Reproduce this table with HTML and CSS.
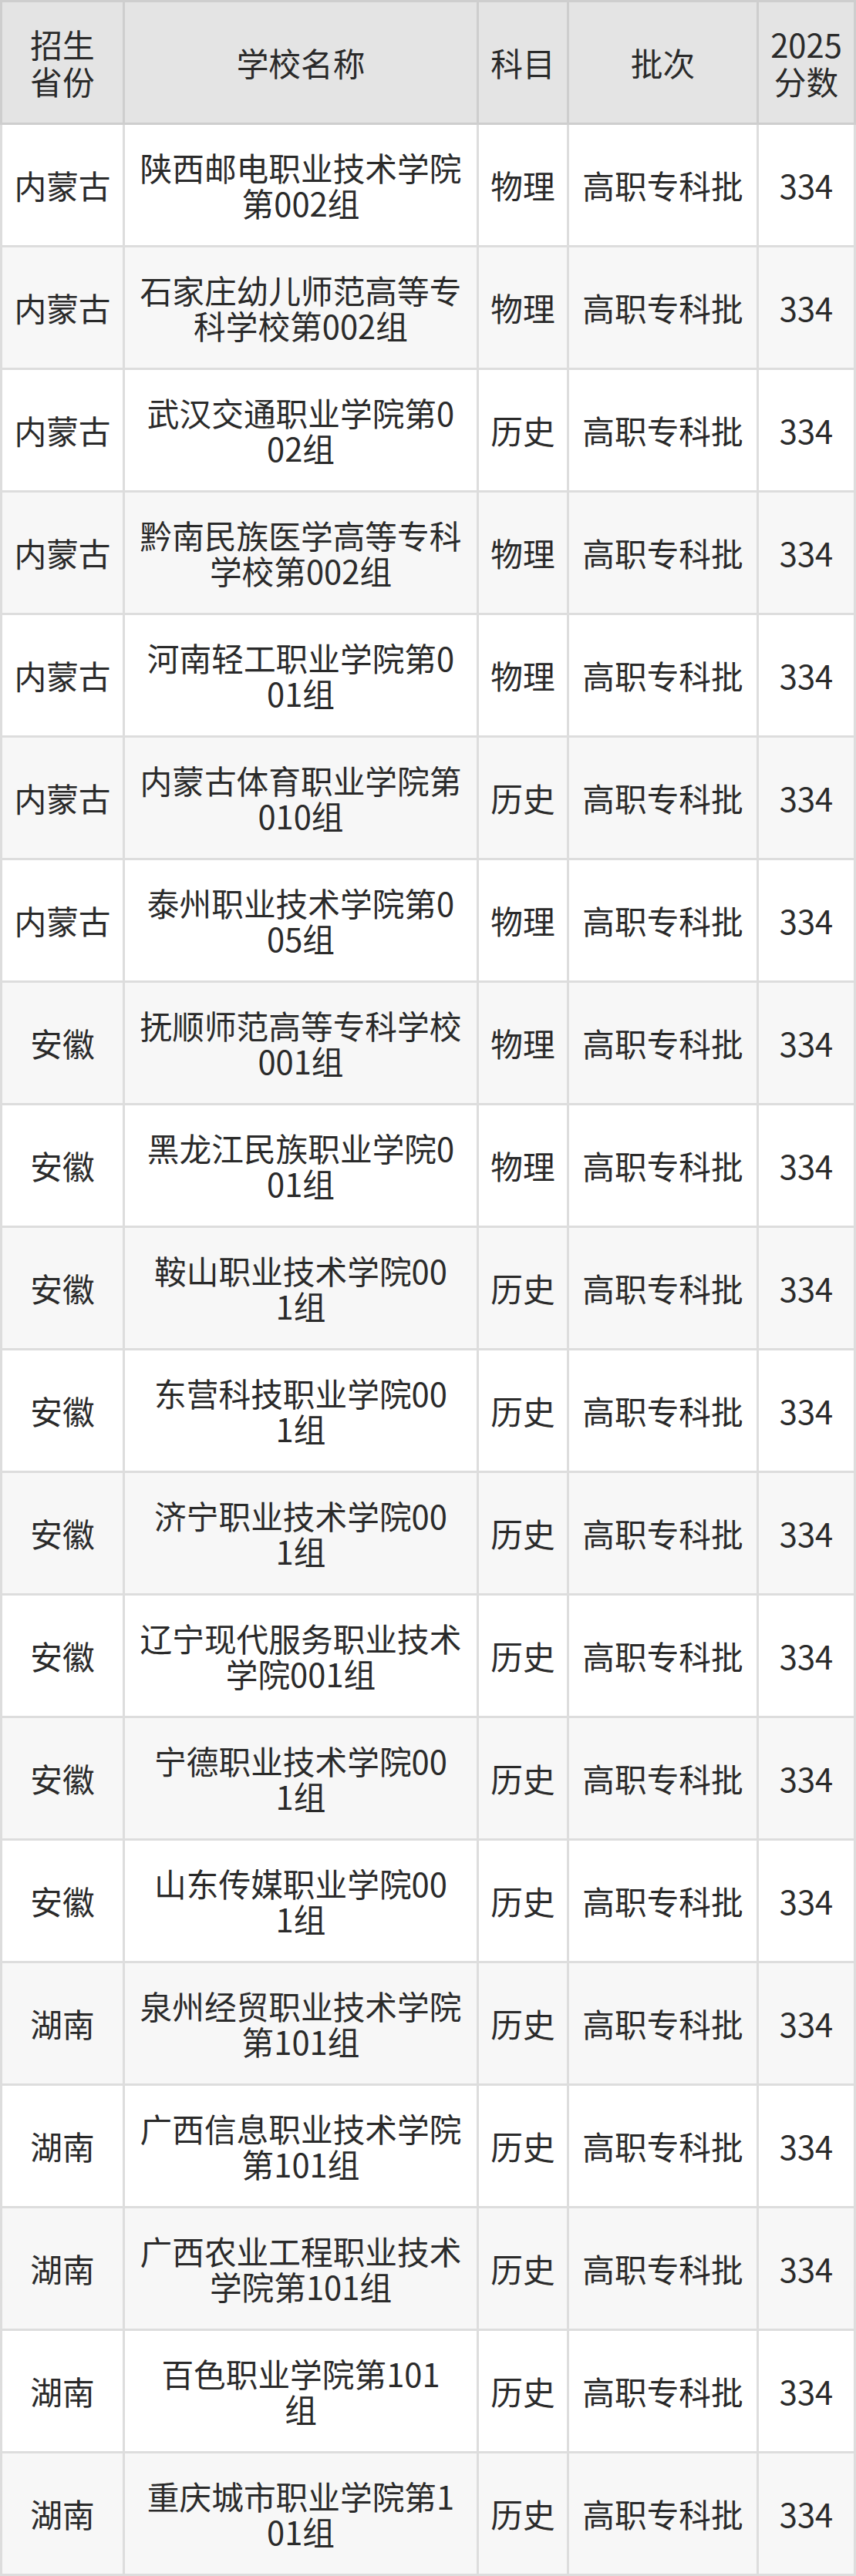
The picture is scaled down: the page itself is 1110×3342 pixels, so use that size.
FILE: index.html
```html
<!DOCTYPE html>
<html lang="zh-CN">
<head>
<meta charset="utf-8">
<title>分数线</title>
<link rel="stylesheet" href="styles.css">
</head>
<body>
<div class="table">
  <div class="row head">
    <div class="cell c1">招生<br>省份</div>
    <div class="cell c2">学校名称</div>
    <div class="cell c3">科目</div>
    <div class="cell c4">批次</div>
    <div class="cell c5">2025<br>分数</div>
  </div>
  <div class="row odd"><div class="cell c1">内蒙古</div><div class="cell c2">陕西邮电职业技术学院<br>第002组</div><div class="cell c3">物理</div><div class="cell c4">高职专科批</div><div class="cell c5">334</div></div>
  <div class="row even"><div class="cell c1">内蒙古</div><div class="cell c2">石家庄幼儿师范高等专<br>科学校第002组</div><div class="cell c3">物理</div><div class="cell c4">高职专科批</div><div class="cell c5">334</div></div>
  <div class="row odd"><div class="cell c1">内蒙古</div><div class="cell c2">武汉交通职业学院第0<br>02组</div><div class="cell c3">历史</div><div class="cell c4">高职专科批</div><div class="cell c5">334</div></div>
  <div class="row even"><div class="cell c1">内蒙古</div><div class="cell c2">黔南民族医学高等专科<br>学校第002组</div><div class="cell c3">物理</div><div class="cell c4">高职专科批</div><div class="cell c5">334</div></div>
  <div class="row odd"><div class="cell c1">内蒙古</div><div class="cell c2">河南轻工职业学院第0<br>01组</div><div class="cell c3">物理</div><div class="cell c4">高职专科批</div><div class="cell c5">334</div></div>
  <div class="row even"><div class="cell c1">内蒙古</div><div class="cell c2">内蒙古体育职业学院第<br>010组</div><div class="cell c3">历史</div><div class="cell c4">高职专科批</div><div class="cell c5">334</div></div>
  <div class="row odd"><div class="cell c1">内蒙古</div><div class="cell c2">泰州职业技术学院第0<br>05组</div><div class="cell c3">物理</div><div class="cell c4">高职专科批</div><div class="cell c5">334</div></div>
  <div class="row even"><div class="cell c1">安徽</div><div class="cell c2">抚顺师范高等专科学校<br>001组</div><div class="cell c3">物理</div><div class="cell c4">高职专科批</div><div class="cell c5">334</div></div>
  <div class="row odd"><div class="cell c1">安徽</div><div class="cell c2">黑龙江民族职业学院0<br>01组</div><div class="cell c3">物理</div><div class="cell c4">高职专科批</div><div class="cell c5">334</div></div>
  <div class="row even"><div class="cell c1">安徽</div><div class="cell c2">鞍山职业技术学院00<br>1组</div><div class="cell c3">历史</div><div class="cell c4">高职专科批</div><div class="cell c5">334</div></div>
  <div class="row odd"><div class="cell c1">安徽</div><div class="cell c2">东营科技职业学院00<br>1组</div><div class="cell c3">历史</div><div class="cell c4">高职专科批</div><div class="cell c5">334</div></div>
  <div class="row even"><div class="cell c1">安徽</div><div class="cell c2">济宁职业技术学院00<br>1组</div><div class="cell c3">历史</div><div class="cell c4">高职专科批</div><div class="cell c5">334</div></div>
  <div class="row odd"><div class="cell c1">安徽</div><div class="cell c2">辽宁现代服务职业技术<br>学院001组</div><div class="cell c3">历史</div><div class="cell c4">高职专科批</div><div class="cell c5">334</div></div>
  <div class="row even"><div class="cell c1">安徽</div><div class="cell c2">宁德职业技术学院00<br>1组</div><div class="cell c3">历史</div><div class="cell c4">高职专科批</div><div class="cell c5">334</div></div>
  <div class="row odd"><div class="cell c1">安徽</div><div class="cell c2">山东传媒职业学院00<br>1组</div><div class="cell c3">历史</div><div class="cell c4">高职专科批</div><div class="cell c5">334</div></div>
  <div class="row even"><div class="cell c1">湖南</div><div class="cell c2">泉州经贸职业技术学院<br>第101组</div><div class="cell c3">历史</div><div class="cell c4">高职专科批</div><div class="cell c5">334</div></div>
  <div class="row odd"><div class="cell c1">湖南</div><div class="cell c2">广西信息职业技术学院<br>第101组</div><div class="cell c3">历史</div><div class="cell c4">高职专科批</div><div class="cell c5">334</div></div>
  <div class="row even"><div class="cell c1">湖南</div><div class="cell c2">广西农业工程职业技术<br>学院第101组</div><div class="cell c3">历史</div><div class="cell c4">高职专科批</div><div class="cell c5">334</div></div>
  <div class="row odd"><div class="cell c1">湖南</div><div class="cell c2">百色职业学院第101<br>组</div><div class="cell c3">历史</div><div class="cell c4">高职专科批</div><div class="cell c5">334</div></div>
  <div class="row even"><div class="cell c1">湖南</div><div class="cell c2">重庆城市职业学院第1<br>01组</div><div class="cell c3">历史</div><div class="cell c4">高职专科批</div><div class="cell c5">334</div></div>
</div>
</body>
</html>
```

FILE: styles.css
```css
html, body {
  margin: 0;
  padding: 0;
  background: #ffffff;
}

body {
  font-family: "Noto Sans CJK SC", "Noto Sans", sans-serif;
  font-size: 41.7px;
  color: #2a2a2a;
  width: 1110px;
}

.table {
  display: flex;
  flex-direction: column;
  width: 1110px;
}

.row {
  display: grid;
  grid-template-columns: 162px 459px 117px 246px 126px;
  height: 159px;
}

.row.head {
  height: 162px;
  background: #e4e4e4;
}

.row.odd {
  background: #ffffff;
}

.row.even {
  background: #f7f7f7;
}

.cell {
  box-sizing: border-box;
  display: flex;
  align-items: center;
  justify-content: center;
  text-align: center;
  white-space: nowrap;
  line-height: 46px;
  border-right: 3px solid #dddddd;
  border-bottom: 3px solid #dddddd;
}

.cell.c1 {
  border-left: 3px solid #dddddd;
}

.head .cell {
  line-height: 48px;
  border-top: 3px solid #cecece;
  border-right-color: #cecece;
  border-bottom-color: #cecece;
}

.head .cell.c1 {
  border-left-color: #cecece;
}
```
